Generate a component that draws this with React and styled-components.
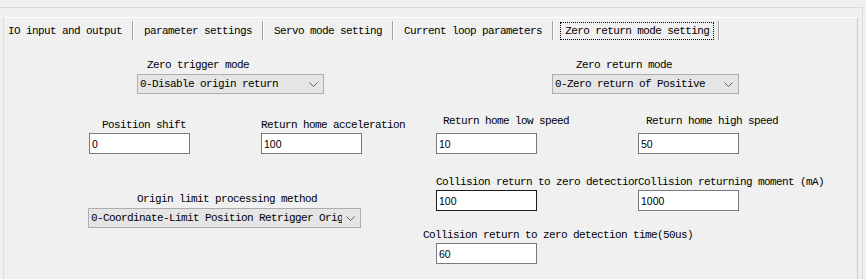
import React from 'react';
import styled, { createGlobalStyle } from 'styled-components';

const GlobalStyle = createGlobalStyle`
    html, body {
        margin: 0;
        padding: 0;
        background: #f0f0f0;
        overflow: hidden;
    }
`;

const mono = `
    font-family: 'Liberation Mono', 'Courier New', monospace;
    font-size: 11px;
    letter-spacing: -0.6px;
    color: #000;
`;

const Frame = styled.div`
    width: 866px;
    height: 279px;
    padding-top: 7px;
    box-sizing: border-box;
    background: #f0f0f0;
`;

const Shell = styled.div`
    width: 862px;
    height: 272px;
    border-top: 1px solid #dadada;
    border-right: 1px solid #dadada;
`;

const Panel = styled.div`
    margin: 9px 0 0 3px;
    width: 855px;
    height: 270px;
    box-sizing: border-box;
    border-top: 1px solid #ffffff;
    border-left: 1px solid #dcdcdc;
    border-right: 1px solid #c9c9c9;
    background: #f0f0f0;
`;

const TabStrip = styled.div`
    display: flex;
    margin-top: 3px;
    height: 19px;
`;

const Tab = styled.div`
    ${mono}
    display: flex;
    align-items: center;
    height: 19px;
    padding: 0 ${p => (p.$active ? 4 : 10)}px 0 ${p => (p.$first ? 4 : p.$active ? 7 : 11)}px;
    border-right: 1px solid #a0a0a0;
    box-shadow: 1px 0 0 #ffffff;
    white-space: nowrap;
`;

const FocusText = styled.span`
    display: inline-block;
    height: 16px;
    line-height: 16px;
    padding: 0 4px;
    border: 1px dotted #000;
`;

const Row = styled.div`
    display: flex;
    align-items: ${p => p.$align || 'flex-start'};
    margin-top: ${p => p.$mt || 0}px;
    padding-left: ${p => p.$pl || 0}px;
`;

const Column = styled.div`
    display: flex;
    flex-direction: column;
    margin-left: ${p => p.$ml || 0}px;
    margin-top: ${p => p.$mt || 0}px;
`;

const Field = styled.div`
    display: flex;
    flex-direction: column;
    width: ${p => (p.$w ? `${p.$w}px` : 'auto')};
    margin-left: ${p => p.$ml || 0}px;
    margin-top: ${p => p.$mt || 0}px;
`;

const Label = styled.div`
    ${mono}
    height: 14px;
    line-height: 14px;
    padding-left: ${p => p.$indent || 0}px;
    margin-bottom: ${p => (p.$mb === undefined ? 2 : p.$mb)}px;
    white-space: nowrap;
    overflow: ${p => (p.$clip ? 'hidden' : 'visible')};
`;

const TextBox = styled.div`
    width: 101px;
    height: 21px;
    box-sizing: border-box;
    margin-left: ${p => p.$ml || 0}px;
    padding-left: 2px;
    border: 1px solid ${p => (p.$focus ? '#1a1a1a' : '#7a7a7a')};
    background: #ffffff;
    display: flex;
    align-items: center;
    font-family: 'Liberation Sans', Arial, sans-serif;
    font-size: 10.5px;
    color: #000;
`;

const Select = styled.div`
    width: ${p => p.$w}px;
    height: 20px;
    box-sizing: border-box;
    display: flex;
    align-items: center;
    border: 1px solid #adadad;
    background: #e5e5e5;
    padding-left: 2px;
`;

const SelectText = styled.div`
    ${mono}
    flex: 1;
    overflow: hidden;
    white-space: nowrap;
`;

const Arrow = styled.div`
    width: 16px;
    padding-right: 2px;
    display: flex;
    justify-content: center;
    align-items: center;
`;

const Chevron = () => (
    <svg width="9" height="5" viewBox="0 0 9 5">
        <polyline points="0.5,0.5 4.5,4.5 8.5,0.5" fill="none" stroke="#606060" strokeWidth="1" />
    </svg>
);

const Dropdown = ({ w, value }) => (
    <Select $w={w}>
        <SelectText>{value}</SelectText>
        <Arrow><Chevron /></Arrow>
    </Select>
);

const tabs = [
    'IO input and output',
    'parameter settings',
    'Servo mode setting',
    'Current loop parameters',
];

export default function App() {
    return (
        <Frame>
            <GlobalStyle />
            <Shell>
                <Panel>
                    <TabStrip>
                        {tabs.map((t, i) => (
                            <Tab key={t} $first={i === 0}>{t}</Tab>
                        ))}
                        <Tab $active><FocusText>Zero return mode setting</FocusText></Tab>
                    </TabStrip>

                    <Row $mt={18}>
                        <Field $ml={133} $w={187}>
                            <Label $indent={10}>Zero trigger mode</Label>
                            <Dropdown w={187} value="0-Disable origin return" />
                        </Field>
                        <Field $ml={228} $w={187}>
                            <Label $indent={24}>Zero return mode</Label>
                            <Dropdown w={187} value="0-Zero return of Positive" />
                        </Field>
                    </Row>

                    <Row $mt={20} $align="flex-end">
                        <Field $ml={85} $w={172}>
                            <Label $indent={13} $mb={1}>Position shift</Label>
                            <TextBox>0</TextBox>
                        </Field>
                        <Field $w={175}>
                            <Label $mb={1}>Return home acceleration</Label>
                            <TextBox>100</TextBox>
                        </Field>
                        <Field $w={202}>
                            <Label $indent={7} $mb={5}>Return home low speed</Label>
                            <TextBox>10</TextBox>
                        </Field>
                        <Field>
                            <Label $indent={8} $mb={5}>Return home high speed</Label>
                            <TextBox>50</TextBox>
                        </Field>
                    </Row>

                    <Row $mt={21}>
                        <Field $ml={84} $mt={17} $w={273}>
                            <Label $indent={49}>Origin limit processing method</Label>
                            <Dropdown w={273} value="0-Coordinate-Limit Position Retrigger Origin" />
                        </Field>
                        <Column $ml={62}>
                            <Row $pl={13}>
                                <Field $w={202}>
                                    <Label $clip $mb={1}>Collision return to zero detection</Label>
                                    <TextBox $focus>100</TextBox>
                                </Field>
                                <Field>
                                    <Label $mb={1}>Collision returning moment (mA)</Label>
                                    <TextBox>1000</TextBox>
                                </Field>
                            </Row>
                            <Field $mt={17}>
                                <Label $mb={1}>Collision return to zero detection time(50us)</Label>
                                <TextBox $ml={13}>60</TextBox>
                            </Field>
                        </Column>
                    </Row>
                </Panel>
            </Shell>
        </Frame>
    );
}
